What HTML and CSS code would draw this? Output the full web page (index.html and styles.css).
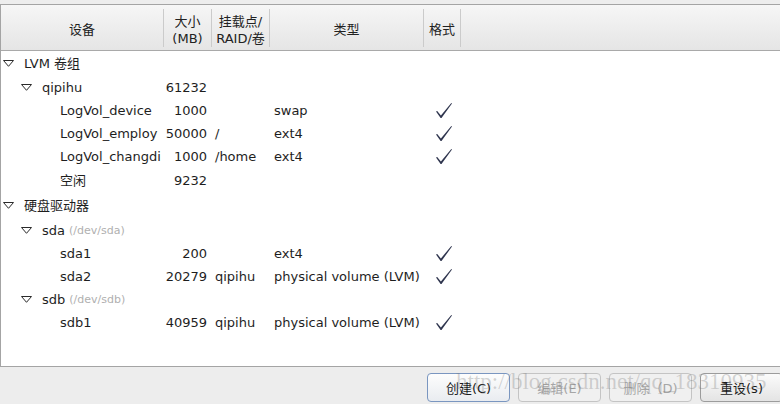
FILE: index.html
```html
<!DOCTYPE html>
<html lang="zh-CN">
<head>
<meta charset="utf-8">
<title>分区</title>
<link rel="stylesheet" href="styles.css">
</head>
<body>
<div class="dialog">
  <div class="tree">
    <div class="head">
      <div class="hc">设备</div>
      <div class="hc">大小<br>(MB)</div>
      <div class="hc">挂载点/<br>RAID/卷</div>
      <div class="hc">类型</div>
      <div class="hc">格式</div>
      <div class="hc last"></div>
    </div>
    <div class="rows">
      <div class="row h24">
        <div class="name l0"><span class="exp"><svg width="11" height="7" viewBox="0 0 11 7"><polygon points="0.5,0.5 10.5,0.5 5.5,6.3" class="tri"/></svg></span>LVM 卷组</div>
        <div class="size"></div><div class="mnt"></div><div class="type"></div><div class="fmt"></div>
      </div>
      <div class="row h24">
        <div class="name l1"><span class="exp"><svg width="11" height="7" viewBox="0 0 11 7"><polygon points="0.5,0.5 10.5,0.5 5.5,6.3" class="tri"/></svg></span>qipihu</div>
        <div class="size">61232</div><div class="mnt"></div><div class="type"></div><div class="fmt"></div>
      </div>
      <div class="row h23">
        <div class="name l2"><span class="exp"></span>LogVol_device</div>
        <div class="size">1000</div><div class="mnt"></div><div class="type">swap</div>
        <div class="fmt"><svg class="chk" width="16" height="16" viewBox="0 0 16 16"><polygon points="0,8.6 1.2,7.9 4.9,12.4 15.3,0 16,0.5 5.5,15.1 4.6,15.1"/></svg></div>
      </div>
      <div class="row h23">
        <div class="name l2"><span class="exp"></span>LogVol_employ</div>
        <div class="size">50000</div><div class="mnt">/</div><div class="type">ext4</div>
        <div class="fmt"><svg class="chk" width="16" height="16" viewBox="0 0 16 16"><polygon points="0,8.6 1.2,7.9 4.9,12.4 15.3,0 16,0.5 5.5,15.1 4.6,15.1"/></svg></div>
      </div>
      <div class="row h23">
        <div class="name l2"><span class="exp"></span>LogVol_changdi</div>
        <div class="size">1000</div><div class="mnt">/home</div><div class="type">ext4</div>
        <div class="fmt"><svg class="chk" width="16" height="16" viewBox="0 0 16 16"><polygon points="0,8.6 1.2,7.9 4.9,12.4 15.3,0 16,0.5 5.5,15.1 4.6,15.1"/></svg></div>
      </div>
      <div class="row h25">
        <div class="name l2"><span class="exp"></span>空闲</div>
        <div class="size">9232</div><div class="mnt"></div><div class="type"></div><div class="fmt"></div>
      </div>
      <div class="row h25">
        <div class="name l0"><span class="exp"><svg width="11" height="7" viewBox="0 0 11 7"><polygon points="0.5,0.5 10.5,0.5 5.5,6.3" class="tri"/></svg></span>硬盘驱动器</div>
        <div class="size"></div><div class="mnt"></div><div class="type"></div><div class="fmt"></div>
      </div>
      <div class="row h24">
        <div class="name l1"><span class="exp"><svg width="11" height="7" viewBox="0 0 11 7"><polygon points="0.5,0.5 10.5,0.5 5.5,6.3" class="tri"/></svg></span>sda <span class="dev">(/dev/sda)</span></div>
        <div class="size"></div><div class="mnt"></div><div class="type"></div><div class="fmt"></div>
      </div>
      <div class="row h23">
        <div class="name l2"><span class="exp"></span>sda1</div>
        <div class="size">200</div><div class="mnt"></div><div class="type">ext4</div>
        <div class="fmt"><svg class="chk" width="16" height="16" viewBox="0 0 16 16"><polygon points="0,8.6 1.2,7.9 4.9,12.4 15.3,0 16,0.5 5.5,15.1 4.6,15.1"/></svg></div>
      </div>
      <div class="row h23">
        <div class="name l2"><span class="exp"></span>sda2</div>
        <div class="size">20279</div><div class="mnt">qipihu</div><div class="type">physical volume (LVM)</div>
        <div class="fmt"><svg class="chk" width="16" height="16" viewBox="0 0 16 16"><polygon points="0,8.6 1.2,7.9 4.9,12.4 15.3,0 16,0.5 5.5,15.1 4.6,15.1"/></svg></div>
      </div>
      <div class="row h23">
        <div class="name l1"><span class="exp"><svg width="11" height="7" viewBox="0 0 11 7"><polygon points="0.5,0.5 10.5,0.5 5.5,6.3" class="tri"/></svg></span>sdb <span class="dev">(/dev/sdb)</span></div>
        <div class="size"></div><div class="mnt"></div><div class="type"></div><div class="fmt"></div>
      </div>
      <div class="row h23">
        <div class="name l2"><span class="exp"></span>sdb1</div>
        <div class="size">40959</div><div class="mnt">qipihu</div><div class="type">physical volume (LVM)</div>
        <div class="fmt"><svg class="chk" width="16" height="16" viewBox="0 0 16 16"><polygon points="0,8.6 1.2,7.9 4.9,12.4 15.3,0 16,0.5 5.5,15.1 4.6,15.1"/></svg></div>
      </div>
    </div>
  </div>
  <div class="buttons">
    <button class="btn default">创建(C)</button>
    <button class="btn" disabled>编辑(E)</button>
    <button class="btn" disabled>删除（D)</button>
    <button class="btn">重设(s)</button>
  </div>
  <div class="watermark">http://blog.csdn.net/qq_18310935</div>
</div>
</body>
</html>
```
FILE: styles.css
```css
html, body {
  margin: 0;
  padding: 0;
}
body {
  width: 780px;
  height: 404px;
  overflow: hidden;
  background: #ededed;
  font-family: "DejaVu Sans", "Noto Sans CJK SC", sans-serif;
  font-size: 13px;
  color: #1e1e1e;
}
.dialog {
  position: relative;
  width: 790px;
  height: 404px;
  padding-top: 4px;
  box-sizing: border-box;
}
.tree {
  box-sizing: border-box;
  height: 363px;
  background: #ffffff;
  border-top: 1px solid #a4a4a4;
  border-left: 1px solid #a4a4a4;
  border-bottom: 1px solid #a4a4a4;
}
.head,
.row {
  display: grid;
  grid-template-columns: 163px 48px 58px 154px 37px 1fr;
}
.head {
  height: 46px;
  box-sizing: border-box;
  padding: 4px 0 3px;
  border-bottom: 1px solid #a9a9a9;
  background: linear-gradient(#f6f6f6, #e5e5e5);
}
.hc {
  box-sizing: border-box;
  padding-top: 3px;
  border-right: 1px solid #cbcbcb;
  display: flex;
  flex-direction: column;
  justify-content: center;
  text-align: center;
  line-height: 17px;
  color: #222222;
}
.hc.last {
  border-right: none;
}
.row {
  align-items: center;
  line-height: 17px;
}
.h23 { height: 23px; }
.h24 { height: 24px; }
.h25 { height: 25px; }
.name {
  display: flex;
  align-items: center;
  white-space: nowrap;
}
.l0 { padding-left: 0; }
.l1 { padding-left: 18px; }
.l2 { padding-left: 36px; }
.exp {
  display: inline-flex;
  align-items: center;
  width: 21px;
  padding-left: 2px;
  flex: none;
}
.tri {
  fill: none;
  stroke: #2a2a2a;
  stroke-width: 1;
}
.dev {
  font-size: 11px;
  color: #b0b0b0;
  margin-left: 4px;
}
.size {
  text-align: right;
  padding-right: 5px;
}
.mnt {
  padding-left: 3px;
  white-space: nowrap;
}
.type {
  padding-left: 4px;
  white-space: nowrap;
}
.fmt {
  display: flex;
  justify-content: center;
  align-items: center;
  padding-left: 3px;
}
.chk polygon {
  fill: #30364f;
}
.buttons {
  display: flex;
  justify-content: flex-end;
  gap: 8px;
  padding: 6px 7px 0 0;
}
.btn {
  box-sizing: border-box;
  width: 83px;
  height: 29px;
  border-radius: 4px;
  border: 1px solid #9c9c9c;
  background: linear-gradient(#fbfbfb, #e4e4e4);
  font-family: "DejaVu Sans", "Noto Sans CJK SC", sans-serif;
  font-size: 13px;
  color: #1a1a1a;
  padding: 0;
}
.btn.default {
  border-color: #7a96c0;
  background: linear-gradient(#fdfdfd, #e9ecf0);
}
.btn:disabled {
  border-color: #c4c4c4;
  background: #f0f0f0;
  color: #a6a6a6;
}
.watermark {
  position: absolute;
  left: 456px;
  top: 369px;
  font-family: "Liberation Serif", serif;
  font-size: 23px;
  color: rgba(110, 110, 110, 0.28);
  white-space: nowrap;
  pointer-events: none;
}
```
